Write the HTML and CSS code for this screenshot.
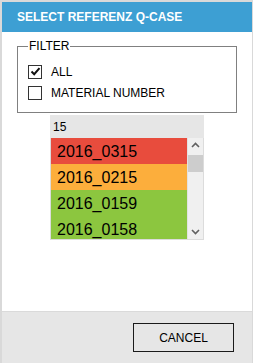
FILE: index.html
```html
<!DOCTYPE html>
<html lang="en">
    <head>
        <meta charset="utf-8">
        <title>Select Referenz Q-Case</title>
        <link rel="stylesheet" href="styles.css">
    </head>
    <body>
        <div class="dialog">
            <header class="title">SELECT REFERENZ Q-CASE</header>
            <main class="content">
                <fieldset class="filter">
                    <legend>FILTER</legend>
                    <label class="option">
                        <span class="box checked">
                            <svg width="11" height="11" viewBox="0 0 11 11"><path d="M1.5 5.5 L4.2 8.2 L9.5 2.2" fill="none" stroke="#111" stroke-width="2"/></svg>
                        </span>
                        ALL
                    </label>
                    <label class="option">
                        <span class="box"></span>
                        MATERIAL NUMBER
                    </label>
                </fieldset>
                <div class="cases">
                    <div class="count">15</div>
                    <div class="list">
                        <ul class="rows">
                            <li class="red">2016_0315</li>
                            <li class="orange">2016_0215</li>
                            <li class="green">2016_0159</li>
                            <li class="green">2016_0158</li>
                        </ul>
                        <div class="scrollbar">
                            <svg class="arrow" width="15" height="14" viewBox="0 0 15 14"><path d="M4 9 L7.5 5.5 L11 9" fill="none" stroke="#606060" stroke-width="1.6"/></svg>
                            <div class="thumb"></div>
                            <div class="track"></div>
                            <svg class="arrow" width="15" height="14" viewBox="0 0 15 14"><path d="M4 5 L7.5 8.5 L11 5" fill="none" stroke="#606060" stroke-width="1.6"/></svg>
                        </div>
                    </div>
                </div>
            </main>
            <footer class="actions">
                <button class="cancel">CANCEL</button>
            </footer>
        </div>
    </body>
</html>
```

FILE: styles.css
```css
html, body {
    margin: 0;
    padding: 0;
}
body {
    background: #d9d9d9;
    font-family: "Liberation Sans", Arial, sans-serif;
    font-size: 12px;
    color: #000;
}
.dialog {
    margin: 2px 1px 0 2px;
    height: 361px;
    display: flex;
    flex-direction: column;
    background: #fff;
}
.title {
    height: 30px;
    line-height: 31px;
    padding-left: 15px;
    background: #3d9fd3;
    color: #fff;
    font-weight: bold;
    font-size: 12px;
}
.content {
    flex: 1;
    padding-top: 7px;
}
.filter {
    margin: 0 15px 0 15px;
    padding: 8px 10px 9px;
    border: 1px solid #808080;
}
.filter legend {
    padding: 0 1px;
    line-height: 14px;
}
.option {
    display: flex;
    align-items: center;
    gap: 9px;
    height: 21px;
}
.box {
    box-sizing: border-box;
    width: 14px;
    height: 14px;
    border: 1px solid #333;
    display: flex;
    align-items: center;
    justify-content: center;
}
.cases {
    margin: 2px 0 0 48px;
    width: 154px;
}
.count {
    height: 23px;
    line-height: 24px;
    padding-left: 3px;
    background: #e6e6e6;
}
.list {
    display: flex;
    height: 101px;
    border: 1px solid #dcdcdc;
    border-top: 0;
    overflow: hidden;
}
.rows {
    list-style: none;
    margin: 0;
    padding: 0;
    flex: 1;
}
.rows li {
    height: 26px;
    line-height: 27px;
    padding-left: 6px;
    font-size: 16px;
}
.red {
    background: #e84c3d;
}
.orange {
    background: #fcae3c;
}
.green {
    background: #8cc63f;
}
.scrollbar {
    width: 15px;
    background: #f0f0f0;
    border-left: 1px solid #e2e2e2;
    display: flex;
    flex-direction: column;
}
.arrow {
    display: block;
    flex: none;
}
.thumb {
    height: 17px;
    margin: 3px 0 0;
    background: #cdcdcd;
}
.track {
    flex: 1;
}
.actions {
    height: 52px;
    border-top: 1px solid #dadada;
    background: #e6e6e6;
    display: flex;
    justify-content: flex-end;
    padding: 11px 18px 0 0;
    box-sizing: border-box;
    align-items: flex-start;
}
.cancel {
    width: 101px;
    height: 29px;
    border: 1px solid #1a1a1a;
    background: #e6e6e6;
    font-family: "Liberation Sans", Arial, sans-serif;
    font-size: 12px;
    color: #000;
    padding: 0;
}
```
